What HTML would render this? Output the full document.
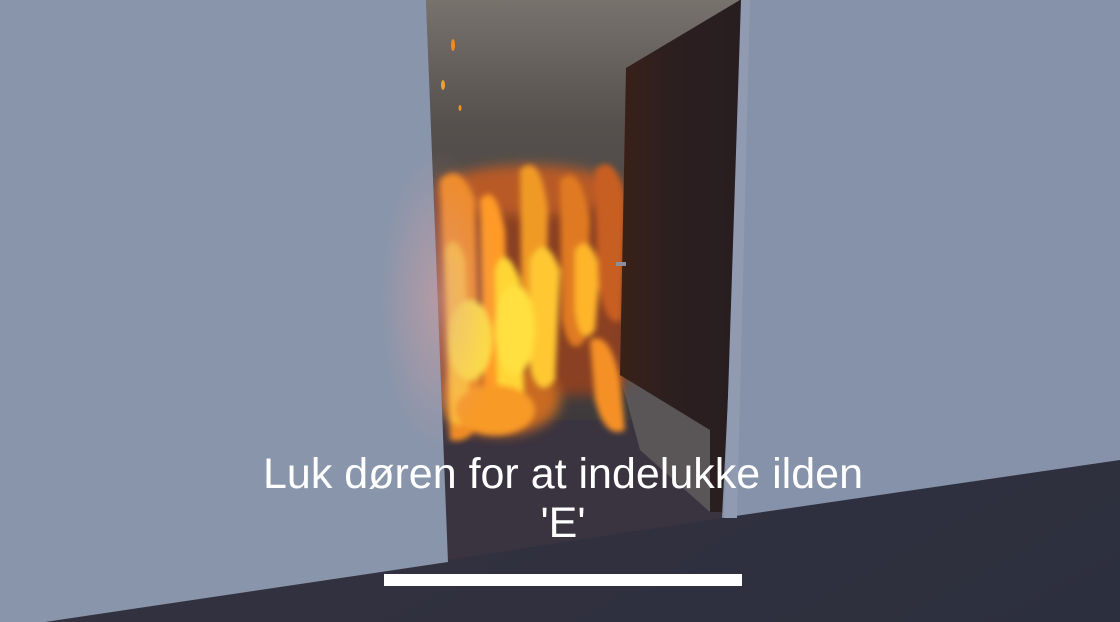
<!DOCTYPE html>
<html><head><meta charset="utf-8"><style>
html,body{margin:0;padding:0;width:1120px;height:622px;overflow:hidden;background:#2f3040}
svg{display:block}
.t{font-family:"Liberation Sans",sans-serif;fill:#fff;font-size:43px;text-anchor:middle}
</style></head><body>
<svg width="1120" height="622" viewBox="0 0 1120 622" xmlns="http://www.w3.org/2000/svg">
<defs>
<linearGradient id="floor" x1="0" y1="0" x2="1" y2="1">
<stop offset="0" stop-color="#3a3442"/><stop offset="1" stop-color="#2c2f3e"/></linearGradient>
<linearGradient id="ceil" x1="0" y1="0" x2="0" y2="1">
<stop offset="0" stop-color="#77726c"/><stop offset="0.3" stop-color="#55504d"/><stop offset="1" stop-color="#3e3a3c"/></linearGradient>
<radialGradient id="glow" cx="0.5" cy="0.5" r="0.5">
<stop offset="0" stop-color="#d9a0a0" stop-opacity="0.55"/><stop offset="1" stop-color="#d9a0a0" stop-opacity="0"/></radialGradient>
<linearGradient id="door" x1="0" y1="0" x2="1" y2="0">
<stop offset="0" stop-color="#3a2018"/><stop offset="0.4" stop-color="#2c1f20"/><stop offset="1" stop-color="#271d20"/></linearGradient>
<filter id="b6"><feGaussianBlur stdDeviation="6"/></filter>
<filter id="b3"><feGaussianBlur stdDeviation="3"/></filter>
<clipPath id="open"><polygon points="426,0 748,0 722,518 448,560"/></clipPath>
</defs>
<rect width="1120" height="622" fill="url(#floor)"/>
<g clip-path="url(#open)">
<rect x="420" y="0" width="340" height="420" fill="url(#ceil)"/>
<polygon points="420,420 760,420 760,622 420,622" fill="#3a3340"/>
<polygon points="620,375 710,430 710,512 640,450" fill="#5a5658"/>
<g filter="url(#b6)">
<rect x="432" y="175" width="195" height="220" rx="20" fill="#8a4020"/>
<ellipse cx="530" cy="190" rx="90" ry="25" fill="#b85a28"/>
<ellipse cx="500" cy="400" rx="60" ry="35" fill="#c86a24"/>
</g>
<g filter="url(#b3)">
<path d="M440,180 Q460,160 475,200 L480,420 Q470,445 450,440 Z" fill="#f08a22"/>
<path d="M445,250 Q455,230 465,260 L470,420 Q460,430 450,420 Z" fill="#ffc030"/>
<path d="M480,200 Q495,180 505,230 L510,430 Q495,440 485,430 Z" fill="#ff9a28"/>
<path d="M495,270 Q505,240 520,280 L525,420 Q510,435 498,420 Z" fill="#ffd535"/>
<path d="M520,170 Q540,150 548,210 L545,360 Q530,380 522,340 Z" fill="#f09a28"/>
<path d="M530,260 Q545,230 560,270 L555,380 Q540,400 530,370 Z" fill="#ffc830"/>
<path d="M560,180 Q580,160 590,220 L585,340 Q570,360 562,320 Z" fill="#e07a22"/>
<path d="M575,250 Q590,230 600,270 L595,330 Q580,350 575,310 Z" fill="#ffb52a"/>
<path d="M590,340 Q610,330 620,380 L625,430 Q605,440 595,400 Z" fill="#f59025"/>
<path d="M595,170 Q615,150 625,200 L622,320 Q605,330 598,280 Z" fill="#c85e22"/>
<ellipse cx="470" cy="340" rx="22" ry="40" fill="#ffe040"/>
<ellipse cx="515" cy="330" rx="20" ry="45" fill="#ffe040"/>
<ellipse cx="495" cy="410" rx="40" ry="25" fill="#f89a28"/>
</g>
<ellipse cx="453" cy="45" rx="2" ry="6" fill="#f08a22"/>
<ellipse cx="443" cy="85" rx="2" ry="5" fill="#f0a030"/>
<ellipse cx="460" cy="108" rx="1.5" ry="3" fill="#f09020"/>
<polygon points="626,68 740,0 748,0 724,512 710,512 710,430 620,375" fill="url(#door)"/>
<rect x="616" y="262" width="10" height="4" fill="#8a8e9a"/>
</g>
<polygon points="0,0 426,0 448,562 45,622 0,622" fill="#8995ab"/>
<ellipse cx="440" cy="300" rx="60" ry="150" fill="url(#glow)"/>
<polygon points="748,0 1120,0 1120,460 722,518" fill="#8692a9"/>
<polygon points="741,0 750,0 737,518 724,518" fill="#909bb1"/>
<text class="t" x="563" y="488">Luk døren for at indelukke ilden</text>
<text class="t" x="563" y="537">'E'</text>
<rect x="384" y="574" width="358" height="12" fill="#fff"/>
</svg>
</body></html>
